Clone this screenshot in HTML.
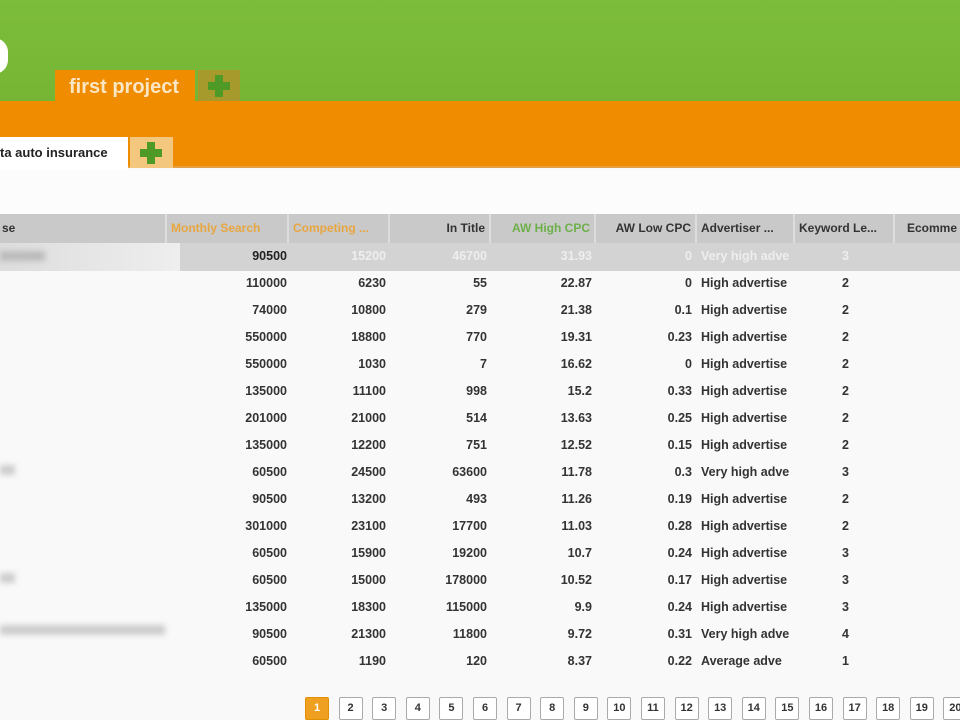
<!DOCTYPE html>
<html><head><style>
*{margin:0;padding:0;box-sizing:border-box}
body{width:960px;height:720px;overflow:hidden;background:#f9f9f9;font-family:"Liberation Sans",sans-serif;position:relative}
.a{position:absolute}
.green{left:0;top:0;width:960px;height:101px;background:linear-gradient(#7dbd3c,#76b534)}
.orange{left:0;top:101px;width:960px;height:67px;background:#f08c00;border-bottom:2px solid #e6a040}
.plus{position:absolute;width:22px;height:22px}
.plus:before{content:"";position:absolute;left:7px;top:0;width:8px;height:22px;background:#4f9a26}
.plus:after{content:"";position:absolute;left:0;top:7px;width:22px;height:8px;background:#4f9a26}
.hdr{top:214px;height:29px;background:#c9c9c9;font-size:12px;font-weight:bold;color:#333;line-height:29px}
.hdr div{position:absolute;top:0;height:29px;border-left:2px solid #ddd;padding:0 4px;white-space:nowrap;overflow:hidden}
.row{left:0;width:960px;height:27px;font-size:12.5px;color:#333;font-weight:bold;line-height:27px}
.row span{position:absolute;white-space:nowrap}
.r{text-align:right}
.pg{top:697px;height:23px;width:24px;border:1px solid #aaa;border-radius:2px;background:#fff;font-size:11px;font-weight:bold;text-align:center;line-height:21px;color:#333}
</style></head><body>
<div class="a green"></div>
<div class="a" style="left:-20px;top:38px;width:28px;height:36px;border-radius:14px;background:#fff"></div>
<div class="a orange"></div>
<div class="a" style="left:55px;top:70px;width:140px;height:33px;background:#f08c00;color:#fbe6c4;font-size:20px;font-weight:bold;line-height:34px;padding-left:14px">first project</div>
<div class="a" style="left:198px;top:70px;width:42px;height:31px;background:#a69a2c"><div class="plus" style="left:10px;top:5px"></div></div>
<div class="a" style="left:0;top:137px;width:128px;height:33px;background:#fff;font-size:13px;font-weight:bold;color:#222;line-height:32px;padding-left:0">ta auto insurance</div>
<div class="a" style="left:130px;top:137px;width:43px;height:31px;background:#f4c77f"><div class="plus" style="left:10px;top:5px"></div></div>
<div class="a" style="left:0;top:170px;width:960px;height:44px;background:#fcfcfc"></div>

<div class="a hdr" style="left:0;width:960px">
<div style="left:-2px;width:167px;border:none">se</div>
<div style="left:165px;width:122px;color:#e8a640">Monthly Search</div>
<div style="left:287px;width:101px;color:#e8a640">Competing ...</div>
<div style="left:388px;width:101px;text-align:right">In Title</div>
<div style="left:489px;width:105px;text-align:right;color:#6db04a">AW High CPC</div>
<div style="left:594px;width:101px;text-align:right">AW Low CPC</div>
<div style="left:695px;width:98px">Advertiser ...</div>
<div style="left:793px;width:100px">Keyword Le...</div>
<div style="left:893px;width:70px;padding-left:12px">Ecomme</div>
</div>

<div class="a" style="left:0;top:243px;width:960px;height:28px;background:#d3d3d3"></div>
<div class="a" style="left:0;top:243px;width:180px;height:28px;background:linear-gradient(90deg,#ddd,#eee)"></div>
<div class="a" style="left:0;top:251px;width:45px;height:10px;background:#bbb;filter:blur(3px)"></div>
<div class="a" style="left:0;top:625px;width:165px;height:10px;background:#ccc;filter:blur(3px)"></div>
<div class="a" style="left:0;top:465px;width:15px;height:10px;background:#ccc;filter:blur(3px)"></div>
<div class="a" style="left:0;top:573px;width:15px;height:10px;background:#ccc;filter:blur(3px)"></div>

<div id="rows"></div>
<script>
var d=[["90500","15200","46700","31.93","0","Very high adve","3"],
["110000","6230","55","22.87","0","High advertise","2"],
["74000","10800","279","21.38","0.1","High advertise","2"],
["550000","18800","770","19.31","0.23","High advertise","2"],
["550000","1030","7","16.62","0","High advertise","2"],
["135000","11100","998","15.2","0.33","High advertise","2"],
["201000","21000","514","13.63","0.25","High advertise","2"],
["135000","12200","751","12.52","0.15","High advertise","2"],
["60500","24500","63600","11.78","0.3","Very high adve","3"],
["90500","13200","493","11.26","0.19","High advertise","2"],
["301000","23100","17700","11.03","0.28","High advertise","2"],
["60500","15900","19200","10.7","0.24","High advertise","3"],
["60500","15000","178000","10.52","0.17","High advertise","3"],
["135000","18300","115000","9.9","0.24","High advertise","3"],
["90500","21300","11800","9.72","0.31","Very high adve","4"],
["60500","1190","120","8.37","0.22","Average adve","1"]];
var rt=[287,386,487,592,692];var h="";
d.forEach(function(r,i){var y=243+i*27;var c=i==0?"color:#eee;":"";
h+='<div class="a row" style="top:'+y+'px;'+c+'">';
for(var j=0;j<5;j++){var col=(i==0&&j==0)?"color:#222;":"";h+='<span class="r" style="right:'+(960-rt[j])+'px;'+col+'">'+r[j]+'</span>';}
h+='<span style="left:701px;width:90px;overflow:hidden">'+r[5]+'</span>';
h+='<span style="left:842px">'+r[6]+'</span></div>';});
var p="";for(var k=1;k<=20;k++){var x=305+(k-1)*33.6;
p+='<div class="a pg" style="left:'+x+'px;'+(k==1?'background:#f0a020;border-color:#e09000;color:#fff;':'')+'">'+k+'</div>';}
document.getElementById("rows").innerHTML=h+p;
</script>
</body></html>
